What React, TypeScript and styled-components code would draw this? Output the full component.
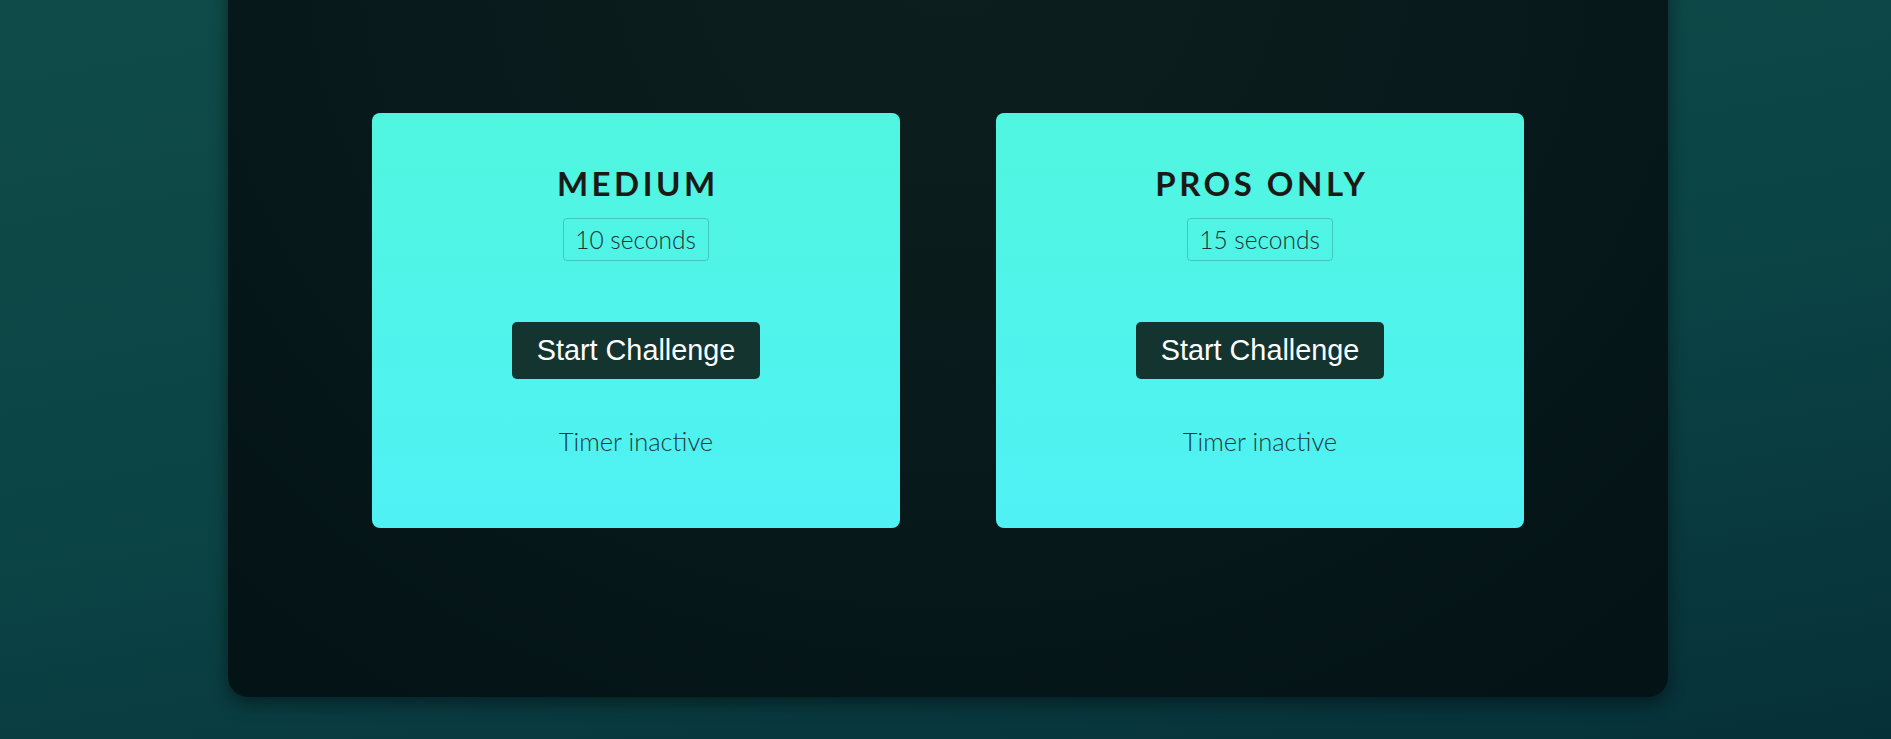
import React from "react";
import styled, { createGlobalStyle } from "styled-components";

const GlobalStyle = createGlobalStyle`
  html, body {
    margin: 0;
    padding: 0;
    height: 100%;
  }
  body {
    background: linear-gradient(170deg, #0f4c49 0%, #0b4345 55%, #063038 100%);
    font-family: "Lato", "Open Sans", sans-serif;
    overflow: hidden;
  }
`;

const Page = styled.div`
  min-height: 100vh;
  display: flex;
  justify-content: center;
  align-items: flex-start;
  padding-left: 5px;
  box-sizing: border-box;
`;

const Panel = styled.main`
  width: 1440px;
  margin-top: -40px;
  box-sizing: border-box;
  padding: 153px 144px 169px;
  border-radius: 20px;
  background: radial-gradient(ellipse 70% 120% at 50% 0%, #0c1f1d 0%, #08191b 60%, #041416 100%);
  box-shadow: 0 6px 18px rgba(0, 0, 0, 0.45);
  display: flex;
  justify-content: space-between;
`;

const Card = styled.section`
  width: 528px;
  height: 415px;
  box-sizing: border-box;
  border-radius: 8px;
  background: linear-gradient(180deg, #50f6df 0%, #50f1f5 100%);
  display: flex;
  flex-direction: column;
  align-items: center;
  padding-top: 50px;
`;

const Title = styled.h2`
  margin: 0;
  font-family: "Lato", "Open Sans", sans-serif;
  font-weight: 700;
  font-size: 33px;
  line-height: 40px;
  letter-spacing: 3.5px;
  padding-left: 3.5px;
  color: #1b1a17;
  text-transform: uppercase;
`;

const Badge = styled.span`
  margin-top: 15px;
  padding: 6px 12px 6px 11px;
  font-family: "Lato", "Open Sans", sans-serif;
  font-weight: 300;
  font-size: 24.5px;
  line-height: 29px;
  color: #173432;
  border: 1px solid rgba(30, 120, 110, 0.35);
  border-radius: 4px;
`;

const StartButton = styled.button`
  margin-top: 61px;
  padding: 12px 25px;
  border: none;
  border-radius: 5px;
  background: #143430;
  color: #ffffff;
  font-family: "Liberation Sans", Arial, sans-serif;
  font-size: 28.8px;
  line-height: 33px;
  cursor: pointer;
`;

const Status = styled.p`
  margin: 47px 0 0;
  font-family: "Lato", "Open Sans", sans-serif;
  font-weight: 300;
  font-size: 25.5px;
  line-height: 30px;
  color: #1a3a38;
`;

type Challenge = { title: string; seconds: number };

const challenges: Challenge[] = [
  { title: "Medium", seconds: 10 },
  { title: "Pros only", seconds: 15 },
];

export default function App() {
  return (
    <>
      <GlobalStyle />
      <Page>
        <Panel>
          {challenges.map((c) => (
            <Card key={c.title}>
              <Title>{c.title}</Title>
              <Badge>{c.seconds} seconds</Badge>
              <StartButton>Start Challenge</StartButton>
              <Status>Timer inactive</Status>
            </Card>
          ))}
        </Panel>
      </Page>
    </>
  );
}
